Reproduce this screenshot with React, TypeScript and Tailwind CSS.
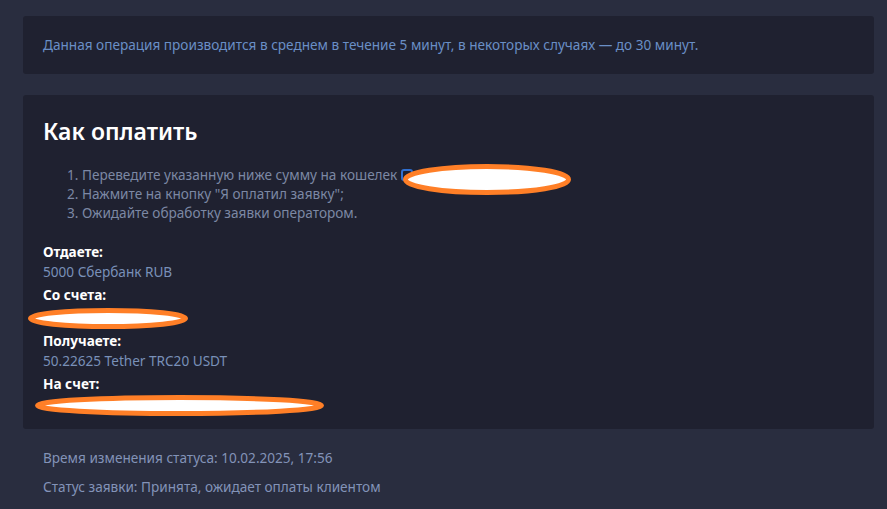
import React from "react";

function Blot({ w, h }: { w: number; h: number }) {
  return (
    <svg width={w} height={h} viewBox={`0 0 ${w} ${h}`} className="block">
      <ellipse cx={w / 2} cy={h / 2} rx={w / 2 - 2.5} ry={h / 2 - 2.5} fill="#ffffff" stroke="#ff7f27" strokeWidth={5} />
    </svg>
  );
}

export default function App() {
  return (
    <div
      className="min-h-[509px] w-[887px] bg-[#292d3f] pt-4 pl-[23px] pr-[13px]"
      style={{ fontFamily: '"Noto Sans", "Open Sans", sans-serif' }}
    >
      <div className="h-[58px] rounded-[3px] bg-[#1f2130] px-5 flex items-center">
        <p className="text-[13.6px] text-[#6a8fc6]">
          Данная операция производится в среднем в течение 5 минут, в некоторых случаях — до 30 минут.
        </p>
      </div>

      <div className="mt-[21px] h-[334px] rounded-[3px] bg-[#1f2130] px-5 pt-[20px]">
        <h2 className="text-[23px] font-semibold leading-[32px] text-white">Как оплатить</h2>
        <ol className="mt-[18px] pl-[24px] text-[13.6px] leading-[19px] text-[#7c88a4]">
          <li className="flex items-center">
            <span>1. Переведите указанную ниже сумму на кошелек</span>
            <span className="relative ml-[4px] inline-block h-[12px] w-[12px] rounded-[3px] border-2 border-[#2f6fd0]">
              <span className="absolute left-[0px] top-[-7px]">
                <Blot w={168} h={31} />
              </span>
            </span>
          </li>
          <li>2. Нажмите на кнопку "Я оплатил заявку";</li>
          <li>3. Ожидайте обработку заявки оператором.</li>
        </ol>

        <div className="mt-[20px] text-[13.6px]">
          <div className="font-bold leading-[20px] text-white">Отдаете:</div>
          <div className="leading-[20px] text-[#7990b8]">5000 Сбербанк RUB</div>
          <div className="mt-[3px] font-bold leading-[20px] text-white">Со счета:</div>
          <div className="ml-[-15px] h-[26px] flex items-center">
            <Blot w={160} h={21} />
          </div>
          <div className="font-bold leading-[20px] text-white">Получаете:</div>
          <div className="leading-[20px] text-[#7990b8]">50.22625 Tether TRC20 USDT</div>
          <div className="mt-[3px] font-bold leading-[20px] text-white">На счет:</div>
          <div className="ml-[-8px] h-[22px] flex items-center">
            <Blot w={289} h={21} />
          </div>
        </div>
      </div>

      <div className="px-5 pt-[19px] text-[13.6px] text-[#8393b8]">
        <p className="leading-[20px]">Время изменения статуса: 10.02.2025, 17:56</p>
        <p className="mt-[9px] leading-[20px]">Статус заявки: Принята, ожидает оплаты клиентом</p>
      </div>
    </div>
  );
}
